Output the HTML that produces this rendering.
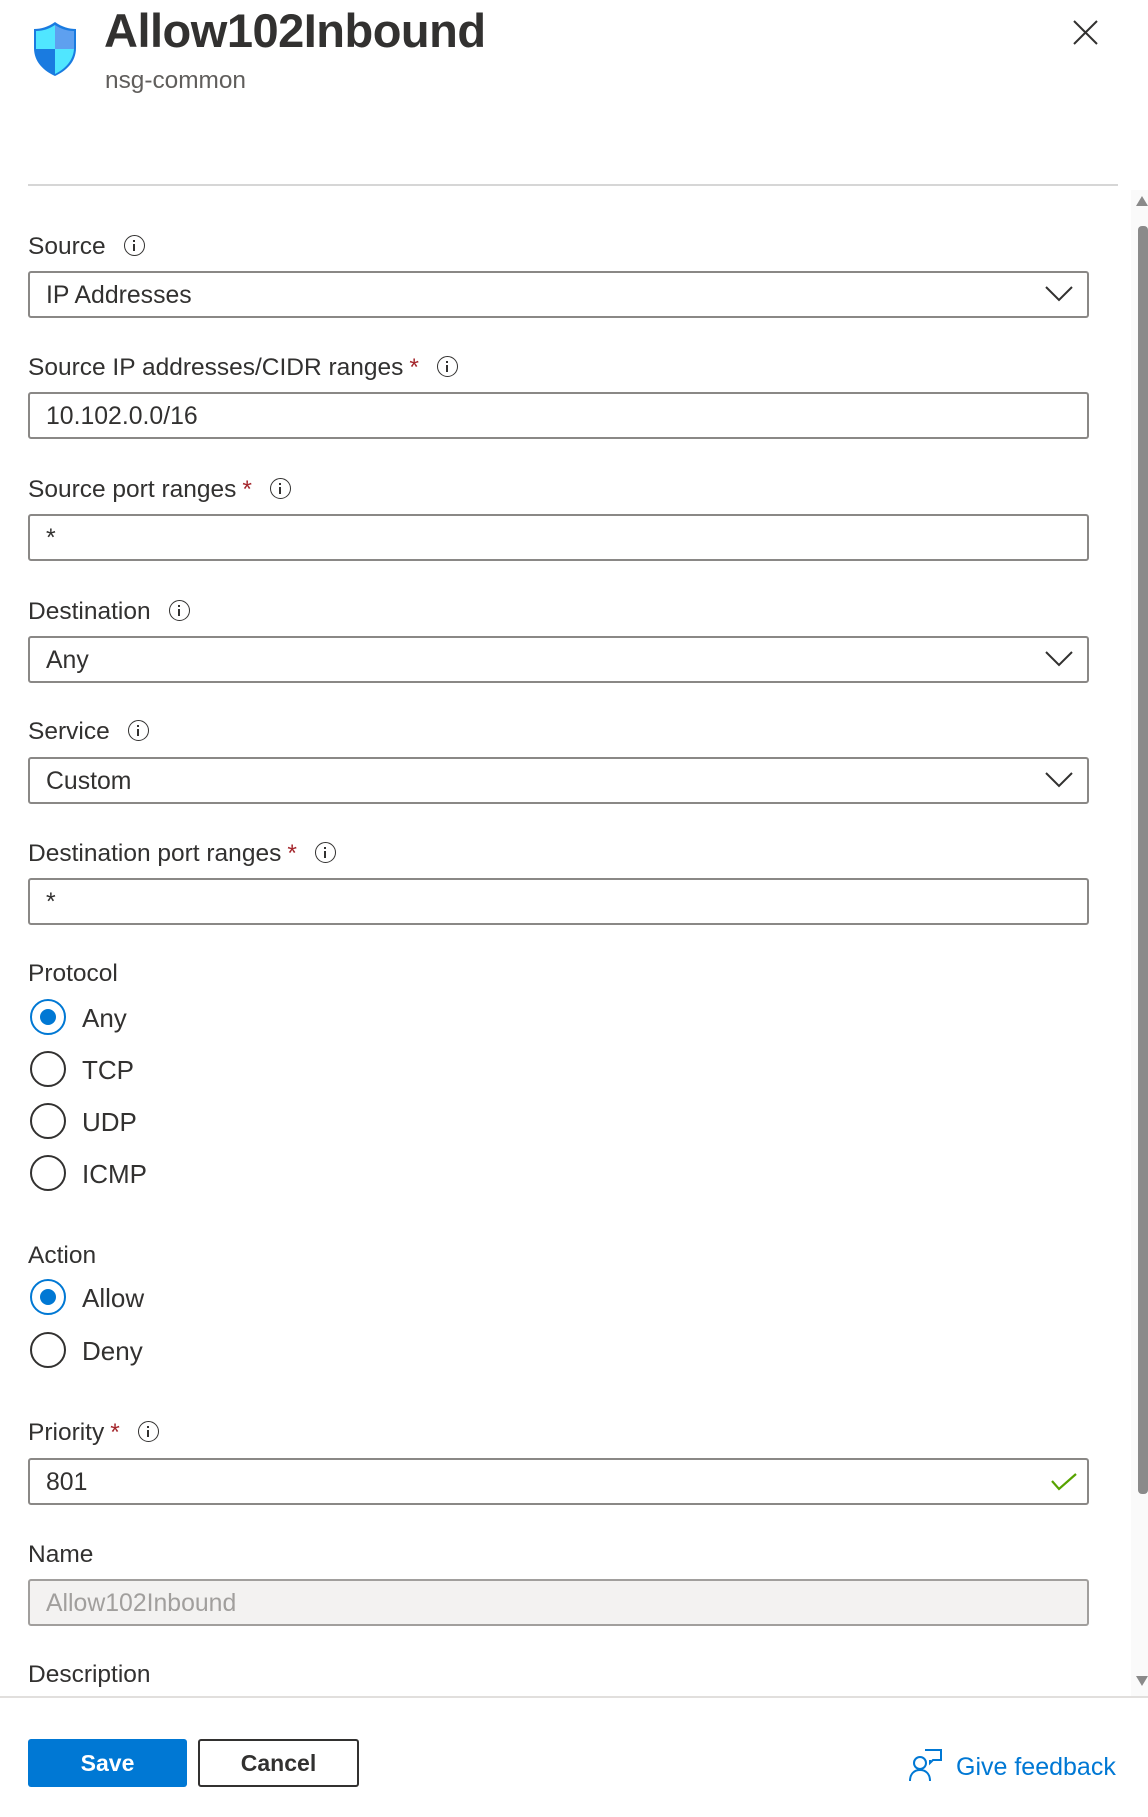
<!DOCTYPE html>
<html><head><meta charset="utf-8"><style>
*{margin:0;padding:0;box-sizing:border-box}
body{width:1148px;height:1817px;background:#fff;font-family:"Liberation Sans",sans-serif;color:#323130;position:relative;overflow:hidden}
.a{position:absolute}
.lbl{position:absolute;left:28px;font-size:24.5px;line-height:28px;color:#323130;white-space:nowrap}
.req{color:#a4262c;margin-left:6px}
.info{display:inline-block;width:21px;height:21px;border:1.5px solid #323130;border-radius:50%;vertical-align:-2px;margin-left:18px;position:relative}
.info:before{content:"";position:absolute;left:8.5px;top:8px;width:1.5px;height:7px;background:#323130}
.info:after{content:"";position:absolute;left:8.5px;top:4px;width:1.6px;height:1.6px;background:#323130}
.box{position:absolute;left:28px;width:1061px;height:47px;border:2px solid #8a8886;border-radius:3px;font-size:24.8px;line-height:45px;padding-left:16px;color:#323130}
.chev{position:absolute;right:14px;top:13px}
.radio{position:absolute;left:30px;width:36px;height:36px;border:2.5px solid #323130;border-radius:50%}
.radio.on{border-color:#0078d4}
.radio.on:after{content:"";position:absolute;left:7.5px;top:7.5px;width:16px;height:16px;border-radius:50%;background:#0078d4}
.rl{position:absolute;left:82px;font-size:26px;line-height:30px}
</style></head><body>
<svg class="a" style="left:30px;top:20px" width="50" height="58" viewBox="0 0 50 58">
<path d="M25 2 C32 7 39 9 46 9 L46 28 C46 42 36 51 25 56 C14 51 4 42 4 28 L4 9 C11 9 18 7 25 2 Z" fill="#1a7be0"/>
<path d="M25 5 L25 29 L6 29 L6 11 C13 11 19 9 25 5 Z" fill="#50e6ff"/>
<path d="M25 29 L44 29 C43 41 35 49 25 54 Z" fill="#50e6ff"/>
<path d="M25 5 C31 9 37 11 44 11 L44 29 L25 29 Z" fill="#5ea0ef"/>
</svg>
<div class="a" style="left:104px;top:2px;font-size:47px;font-weight:700;line-height:58px;color:#323130;letter-spacing:-0.5px">Allow102Inbound</div>
<div class="a" style="left:105px;top:66px;font-size:24.4px;line-height:30px;color:#605e5c">nsg-common</div>
<svg class="a" style="left:1073px;top:20px" width="25" height="25" viewBox="0 0 25 25"><path d="M1 1L24 24M24 1L1 24" stroke="#323130" stroke-width="2"/></svg>
<div class="a" style="left:28px;top:184px;width:1090px;height:2px;background:#d6d6d6"></div>
<div class="a" style="left:1131px;top:190px;width:17px;height:1506px;background:#fafafa"></div>
<div class="a" style="left:1138px;top:226px;width:10px;height:1268px;background:#8a8a8a;border-radius:4px"></div>
<svg class="a" style="left:1136px;top:196px" width="12" height="10"><path d="M6 0L12 10H0Z" fill="#8a8a8a"/></svg>
<svg class="a" style="left:1136px;top:1676px" width="12" height="10"><path d="M0 0H12L6 10Z" fill="#8a8a8a"/></svg>

<div class="lbl" style="top:233px">Source<span class="info"></span></div>
<div class="box" style="top:271px">IP Addresses<svg class="chev" width="28" height="16" viewBox="0 0 28 16"><path d="M1 1L14 14L27 1" fill="none" stroke="#323130" stroke-width="2"/></svg></div>

<div class="lbl" style="top:354px">Source IP addresses/CIDR ranges<span class="req">*</span><span class="info"></span></div>
<div class="box" style="top:392px">10.102.0.0/16</div>

<div class="lbl" style="top:476px">Source port ranges<span class="req">*</span><span class="info"></span></div>
<div class="box" style="top:514px">*</div>

<div class="lbl" style="top:598px">Destination<span class="info"></span></div>
<div class="box" style="top:636px">Any<svg class="chev" width="28" height="16" viewBox="0 0 28 16"><path d="M1 1L14 14L27 1" fill="none" stroke="#323130" stroke-width="2"/></svg></div>

<div class="lbl" style="top:718px">Service<span class="info"></span></div>
<div class="box" style="top:757px">Custom<svg class="chev" width="28" height="16" viewBox="0 0 28 16"><path d="M1 1L14 14L27 1" fill="none" stroke="#323130" stroke-width="2"/></svg></div>

<div class="lbl" style="top:840px">Destination port ranges<span class="req">*</span><span class="info"></span></div>
<div class="box" style="top:878px">*</div>

<div class="lbl" style="top:960px">Protocol</div>
<div class="radio on" style="top:999px"></div><div class="rl" style="top:1003px">Any</div>
<div class="radio" style="top:1051px"></div><div class="rl" style="top:1055px">TCP</div>
<div class="radio" style="top:1103px"></div><div class="rl" style="top:1107px">UDP</div>
<div class="radio" style="top:1155px"></div><div class="rl" style="top:1159px">ICMP</div>

<div class="lbl" style="top:1242px">Action</div>
<div class="radio on" style="top:1279px"></div><div class="rl" style="top:1283px">Allow</div>
<div class="radio" style="top:1332px"></div><div class="rl" style="top:1336px">Deny</div>

<div class="lbl" style="top:1419px">Priority<span class="req">*</span><span class="info"></span></div>
<div class="box" style="top:1458px">801<svg class="a" style="right:10px;top:12px" width="26" height="20" viewBox="0 0 26 20"><path d="M1 9L8 17L25 2" fill="none" stroke="#57a300" stroke-width="2.2"/></svg></div>

<div class="lbl" style="top:1541px">Name</div>
<div class="box" style="top:1579px;background:#f3f2f1;border-color:#a19f9d;color:#a19f9d">Allow102Inbound</div>

<div class="lbl" style="top:1661px">Description</div>

<div class="a" style="left:0;top:1696px;width:1148px;height:2px;background:#e1dfdd"></div>
<div class="a" style="left:28px;top:1739px;width:159px;height:48px;background:#0078d4;border-radius:3px;color:#fff;font-weight:700;font-size:23px;line-height:48px;text-align:center">Save</div>
<div class="a" style="left:198px;top:1739px;width:161px;height:48px;border:2px solid #323130;border-radius:3px;color:#323130;font-weight:700;font-size:23px;line-height:44px;text-align:center">Cancel</div>
<svg class="a" style="left:908px;top:1748px" width="34" height="34" viewBox="0 0 34 34"><g fill="none" stroke="#0078d4" stroke-width="2"><circle cx="12" cy="15" r="6"/><path d="M2 33C2 26 6 22 12 22C18 22 22 26 22 33"/><path d="M17 2H33V12H25L22 15V12"/></g></svg>
<div class="a" style="left:956px;top:1752px;font-size:25px;line-height:30px;color:#0078d4">Give feedback</div>
</body></html>
